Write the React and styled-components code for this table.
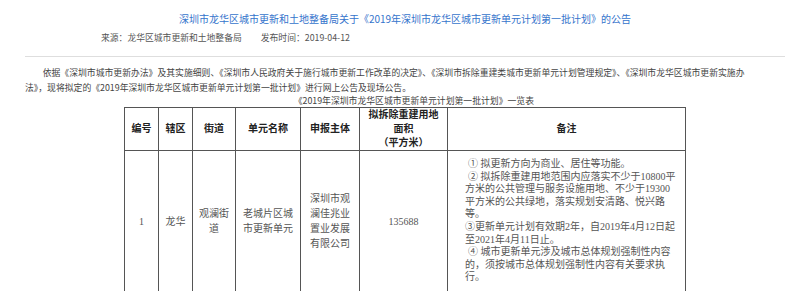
import styled, { createGlobalStyle } from "styled-components";

const GlobalStyle = createGlobalStyle`
  html, body {
    margin: 0;
    padding: 0;
    background: #fff;
  }
  body {
    font-family: "Noto Sans CJK SC", "Liberation Sans", sans-serif;
  }
`

const Page = styled.div`
  width: 760px;
  padding: 12px 15px 0 25px;
`

const Title = styled.h1`
  margin: 0;
  font-size: 10px;
  font-weight: normal;
  line-height: 14px;
  color: #3574cc;
  text-align: center;
  white-space: nowrap;
`

const Meta = styled.div`
  display: flex;
  gap: 19px;
  margin-top: 5px;
  padding-left: 76px;
  font-size: 8.8px;
  line-height: 14px;
  color: #555;
`

const Rule = styled.hr`
  margin: 11px 0 0;
  border: 0;
  border-top: 1px solid #dedede;
`

const Para = styled.p`
  margin: 8px 0 0;
  font-size: 8.84px;
  line-height: 15px;
  color: #444;
  white-space: nowrap;
  text-indent: ${({ $indent }) => ($indent ? "2em" : "0")};
  text-align: ${({ $center }) => ($center ? "center" : "left")};
`

const Caption = styled(Para)`
  margin: 0;
  line-height: 12px;
`

const Table = styled.table`
  margin-left: 99px;
  border-collapse: collapse;
  table-layout: fixed;
  width: 561px;
  font-family: "Liberation Serif", "Noto Sans CJK SC", serif;
  font-size: 10px;
`

const Th = styled.th`
  height: 40px;
  padding: 0;
  border: 1px solid #555;
  font-weight: bold;
  line-height: 14px;
  color: #222;
  text-align: center;
  vertical-align: middle;
`

const Td = styled.td`
  height: 140px;
  padding: 0 ${({ $pad }) => $pad || 0}px;
  border: 1px solid #555;
  line-height: 15px;
  color: #555;
  text-align: center;
  vertical-align: middle;
`

const Notes = styled.td`
  padding: 0 4px 0 17px;
  border: 1px solid #555;
  line-height: 12.6px;
  color: #555;
  vertical-align: middle;
`

const NoteLine = styled.div`
  white-space: nowrap;
  padding-left: ${({ $in }) => ($in ? 3 : 0)}px;
`

const cols = [34, 34, 43, 65, 59, 88, 238]

const notes = [
  ["① 拟更新方向为商业、居住等功能。", true],
  ["② 拟拆除重建用地范围内应落实不少于10800平", true],
  ["方米的公共管理与服务设施用地、不少于19300"],
  ["平方米的公共绿地，落实规划安清路、悦兴路"],
  ["等。"],
  ["③更新单元计划有效期2年，自2019年4月12日起"],
  ["至2021年4月11日止。"],
  ["④  城市更新单元涉及城市总体规划强制性内容", true],
  ["的，须按城市总体规划强制性内容有关要求执"],
  ["行。"],
]

const App = () => {
  return (
    <Page>
      <GlobalStyle />
      <Title>
        深圳市龙华区城市更新和土地整备局关于《2019年深圳市龙华区城市更新单元计划第一批计划》的公告
      </Title>
      <Meta>
        <span>来源：龙华区城市更新和土地整备局</span>
        <span>发布时间：2019-04-12</span>
      </Meta>
      <Rule />
      <Para $indent>
        依据《深圳市城市更新办法》及其实施细则、《深圳市人民政府关于施行城市更新工作改革的决定》、《深圳市拆除重建类城市更新单元计划管理规定》、《深圳市龙华区城市更新实施办
        <br />
        法》，现将拟定的《2019年深圳市龙华区城市更新单元计划第一批计划》进行网上公告及现场公告。
      </Para>
      <Caption $indent $center>
        《2019年深圳市龙华区城市更新单元计划第一批计划》一览表
      </Caption>
      <Table>
        <colgroup>
          {cols.map((w, i) => (
            <col key={i} style={{ width: w }} />
          ))}
        </colgroup>
        <thead>
          <tr>
            <Th>编号</Th>
            <Th>辖区</Th>
            <Th>街道</Th>
            <Th>单元名称</Th>
            <Th>申报主体</Th>
            <Th>
              拟拆除重建用地
              <br />
              面积
              <br />
              （平方米）
            </Th>
            <Th>备注</Th>
          </tr>
        </thead>
        <tbody>
          <tr>
            <Td>1</Td>
            <Td>龙华</Td>
            <Td $pad={4}>观澜街道</Td>
            <Td $pad={6}>老城片区城市更新单元</Td>
            <Td $pad={8}>深圳市观澜佳兆业置业发展有限公司</Td>
            <Td>135688</Td>
            <Notes>
              {notes.map(([t, indent], i) => (
                <NoteLine key={i} $in={indent}>
                  {t}
                </NoteLine>
              ))}
            </Notes>
          </tr>
        </tbody>
      </Table>
    </Page>
  )
}

export default App
